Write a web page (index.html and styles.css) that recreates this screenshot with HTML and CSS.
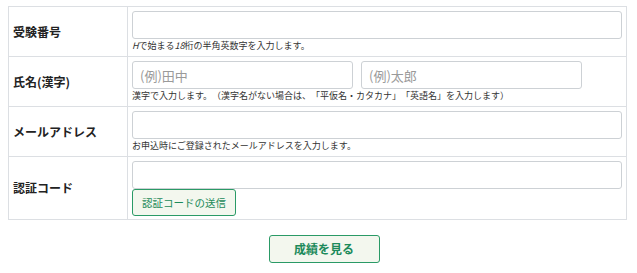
FILE: index.html
```html
<!DOCTYPE html>
<html lang="ja">
<head>
<meta charset="utf-8">
<link rel="stylesheet" href="styles.css">
</head>
<body>
<div class="page">
  <table class="form-table">
    <tr class="row">
      <th class="label">受験番号</th>
      <td class="value">
        <input class="field field-full" type="text">
        <p class="help"><i>H</i>で始まる<i>18</i>桁の半角英数字を入力します。</p>
      </td>
    </tr>
    <tr class="row">
      <th class="label">氏名(漢字)</th>
      <td class="value">
        <div class="name-pair">
          <input class="field field-half" type="text" placeholder="(例)田中">
          <input class="field field-half" type="text" placeholder="(例)太郎">
        </div>
        <p class="help">漢字で入力します。（漢字名がない場合は、「平仮名・カタカナ」「英語名」を入力します）</p>
      </td>
    </tr>
    <tr class="row">
      <th class="label">メールアドレス</th>
      <td class="value">
        <input class="field field-full" type="text">
        <p class="help">お申込時にご登録されたメールアドレスを入力します。</p>
      </td>
    </tr>
    <tr class="row row-code">
      <th class="label">認証コード</th>
      <td class="value value-code">
        <input class="field field-full" type="text">
        <button class="btn btn-send" type="button">認証コードの送信</button>
      </td>
    </tr>
  </table>
  <div class="actions">
    <button class="btn btn-submit" type="button">成績を見る</button>
  </div>
</div>
</body>
</html>
```
FILE: styles.css
```css
* { box-sizing: border-box; }
html, body { margin: 0; padding: 0; background: #fff; }
body {
  font-family: "Noto Sans CJK JP", "Noto Sans", sans-serif;
  color: #333;
  text-spacing-trim: space-all;
}
.page {
  padding: 6px 10px 0 8px;
}
.form-table {
  width: 619px;
  border-collapse: collapse;
  border: 1px solid #dcdfe3;
}
.row th, .row td {
  border: 1px solid #dcdfe3;
}
.label {
  width: 119px;
  text-align: left;
  vertical-align: middle;
  font-size: 12px;
  font-weight: bold;
  line-height: 16px;
  color: #222;
  padding: 0 4px;
}
.value {
  padding: 4px 4px 4px 4px;
  vertical-align: top;
}
.row-code .value { padding-bottom: 3px; }
.field {
  display: block;
  height: 28px;
  border: 1px solid #cdd1d5;
  border-radius: 3px;
  padding: 0 7px;
  font-family: "Noto Sans CJK JP", "Noto Sans", sans-serif;
  font-size: 13px;
  color: #333;
  background: #fff;
  outline: none;
}
.field::placeholder { color: #9a9a9a; }
.field-full { width: 490px; }
.name-pair {
  display: flex;
  gap: 8px;
}
.field-half { width: 221px; }
.help {
  margin: 1px 0 0;
  font-size: 9px;
  line-height: 12px;
  color: #333;
  text-spacing-trim: space-all;
}
.help i { font-style: italic; }
.btn {
  font-family: "Noto Sans CJK JP", "Noto Sans", sans-serif;
  background: #f3f7ee;
  border: 1px solid #2a9a66;
  border-radius: 3px;
  color: #1c8a5a;
  cursor: pointer;
}
.btn-send {
  display: block;
  margin-top: 0;
  width: 104px;
  height: 27px;
  padding: 0;
  font-size: 10.5px;
  line-height: 14px;
}
.actions {
  display: flex;
  justify-content: center;
  padding-left: 13px;
  margin-top: 15px;
}
.btn-submit {
  width: 111px;
  height: 28px;
  padding: 0;
  font-size: 12px;
  font-weight: bold;
  line-height: 16px;
}
```
